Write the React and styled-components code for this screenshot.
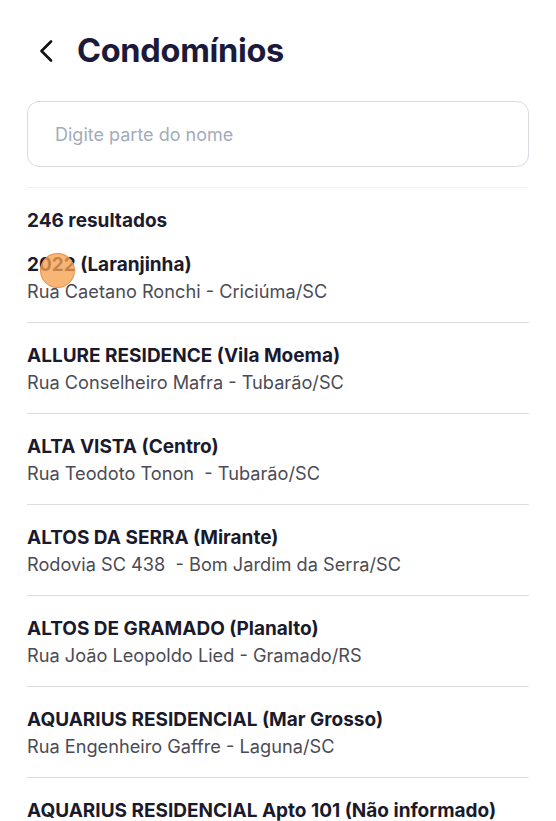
import React from "react";
import styled, { createGlobalStyle } from "styled-components";

const Global = createGlobalStyle`
  html, body { margin: 0; padding: 0; background: #ffffff; }
  body { font-family: Inter, "Noto Sans", sans-serif; -webkit-font-smoothing: antialiased; }
  * { box-sizing: border-box; }
`;

const Page = styled.div`
  position: relative;
  width: 556px;
  height: 821px;
  overflow: hidden;
  padding: 0 27px;
  background: #fff;
`;

const Header = styled.header`
  display: flex;
  align-items: center;
  gap: 22px;
  height: 101px;
  padding-left: 10px;
`;

const BackButton = styled.button`
  display: flex;
  align-items: center;
  justify-content: center;
  border: 0;
  background: none;
  padding: 0;
  width: 18px;
  height: 24px;
  color: #111;
  cursor: pointer;
`;

const Title = styled.h1`
  margin: 0;
  font-size: 32.5px;
  font-weight: 700;
  color: #1c1a3a;
  letter-spacing: -0.3px;
`;

const SearchInput = styled.input`
  display: block;
  width: 100%;
  height: 66px;
  border: 1px solid #d8dbe0;
  border-radius: 12px;
  padding: 0 27px;
  font-family: Inter, sans-serif;
  font-size: 18px;
  color: #222;
  outline: none;
  &::placeholder { color: #a3acba; }
`;

const Separator = styled.div`
  height: 1px;
  background: #f0f1f3;
  margin-top: 20px;
`;

const Count = styled.div`
  padding-top: 21px;
  font-size: 19px;
  line-height: 23px;
  font-weight: 700;
  color: #1d1c2e;
`;

const List = styled.ul`
  list-style: none;
  margin: 0;
  padding: 0;
`;

const Item = styled.li`
  padding: 19px 0 17px;
  border-bottom: 1px solid #dcdde0;
`;

const Name = styled.div`
  font-size: 19px;
  line-height: 27px;
  font-weight: 700;
  color: #1a1a2c;
  white-space: pre;
`;

const Address = styled.div`
  font-size: 18.2px;
  line-height: 27px;
  font-weight: 400;
  color: #4b4b55;
  white-space: pre;
`;

const Touch = styled.div`
  position: absolute;
  left: 40px;
  top: 253px;
  width: 35px;
  height: 35px;
  border-radius: 50%;
  background: rgba(245, 160, 80, 0.78);
  border: 1.5px solid rgba(235, 140, 60, 0.9);
  pointer-events: none;
`;

const items = [
  ["2022 (Laranjinha)", "Rua Caetano Ronchi - Criciúma/SC"],
  ["ALLURE RESIDENCE (Vila Moema)", "Rua Conselheiro Mafra - Tubarão/SC"],
  ["ALTA VISTA (Centro)", "Rua Teodoto Tonon  - Tubarão/SC"],
  ["ALTOS DA SERRA (Mirante)", "Rodovia SC 438  - Bom Jardim da Serra/SC"],
  ["ALTOS DE GRAMADO (Planalto)", "Rua João Leopoldo Lied - Gramado/RS"],
  ["AQUARIUS RESIDENCIAL (Mar Grosso)", "Rua Engenheiro Gaffre - Laguna/SC"],
  ["AQUARIUS RESIDENCIAL Apto 101 (Não informado)", "Rua Engenheiro Gaffre - Laguna/SC"],
];

export default function App() {
  return (
    <>
      <Global />
      <Page>
        <Header>
          <BackButton aria-label="Voltar">
            <svg width="14" height="22" viewBox="0 0 14 22" fill="none">
              <path d="M12 1.5 L2.5 11 L12 20.5" stroke="#111" strokeWidth="2.6" strokeLinecap="round" strokeLinejoin="round" />
            </svg>
          </BackButton>
          <Title>Condomínios</Title>
        </Header>
        <SearchInput placeholder="Digite parte do nome" />
        <Separator />
        <Count>246 resultados</Count>
        <List>
          {items.map(([n, a], i) => (
            <Item key={i}>
              <Name>{n}</Name>
              <Address>{a}</Address>
            </Item>
          ))}
        </List>
        <Touch />
      </Page>
    </>
  );
}
